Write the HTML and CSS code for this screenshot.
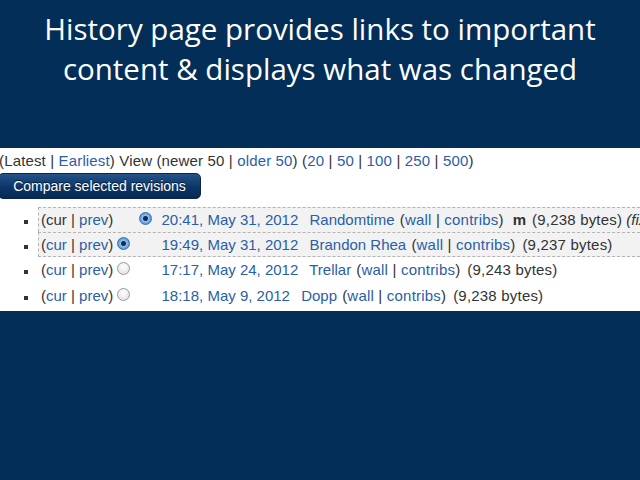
FILE: index.html
```html
<!DOCTYPE html>
<html lang="en">
<head>
  <meta charset="UTF-8">
  <meta name="viewport" content="width=device-width, initial-scale=1.0">
  <title>History page</title>
  <link rel="stylesheet" href="styles.css">
</head>
<body>
  <h1 class="slide-title">History page provides links to important<br>content &amp; displays what was changed</h1>

  <div class="history">
    <div class="nav-line">(Latest | <a href="#">Earliest</a>) View (newer 50 | <a href="#">older 50</a>) (<a href="#">20</a> | <a href="#">50</a> | <a href="#">100</a> | <a href="#">250</a> | <a href="#">500</a>)</div>
    <button class="compare-btn">Compare selected revisions</button>

    <ul class="revisions">
      <li class="selected">
        <span class="diff-links">(cur | <a href="#">prev</a>)</span>
        <span class="radio-slot"></span>
        <span class="radio-slot"><span class="radio checked"></span></span>
        <a href="#" class="date">20:41, May 31, 2012</a>
        <a href="#">Randomtime</a> <span class="user-tools">(<a href="#">wall</a> | <a href="#">contribs</a>)</span><b class="minor">m</b><span class="bytes minor-bytes">(9,238 bytes)</span> <i>(fixed</i>
      </li>
      <li class="selected">
        <span class="diff-links">(<a href="#">cur</a> | <a href="#">prev</a>)</span>
        <span class="radio-slot"><span class="radio checked"></span></span>
        <span class="radio-slot"></span>
        <a href="#" class="date">19:49, May 31, 2012</a>
        <a href="#">Brandon Rhea</a> <span class="user-tools">(<a href="#">wall</a> | <a href="#">contribs</a>)</span><span class="bytes">(9,237 bytes)</span>
      </li>
      <li>
        <span class="diff-links">(<a href="#">cur</a> | <a href="#">prev</a>)</span>
        <span class="radio-slot"><span class="radio"></span></span>
        <span class="radio-slot"></span>
        <a href="#" class="date">17:17, May 24, 2012</a>
        <a href="#">Trellar</a> <span class="user-tools">(<a href="#">wall</a> | <a href="#">contribs</a>)</span><span class="bytes">(9,243 bytes)</span>
      </li>
      <li>
        <span class="diff-links">(<a href="#">cur</a> | <a href="#">prev</a>)</span>
        <span class="radio-slot"><span class="radio"></span></span>
        <span class="radio-slot"></span>
        <a href="#" class="date">18:18, May 9, 2012</a>
        <a href="#">Dopp</a> <span class="user-tools">(<a href="#">wall</a> | <a href="#">contribs</a>)</span><span class="bytes">(9,238 bytes)</span>
      </li>
    </ul>
  </div>
</body>
</html>
```

FILE: styles.css
```css
body {
  margin: 0;
  padding: 0;
  background-color: #022e58;
  overflow: hidden;
}

.slide-title {
  margin: 0;
  padding: 9px 0 0;
  height: 138px;
  box-sizing: border-box;
  font-family: "Open Sans", sans-serif;
  font-weight: normal;
  font-size: 29.5px;
  line-height: 40px;
  color: #fff;
  text-align: center;
}

.history {
  background-color: #fff;
  height: 163px;
  margin-top: 10px;
  font-family: "Liberation Sans", Arial, sans-serif;
  font-size: 15px;
  color: #333;
  white-space: nowrap;
  overflow: hidden;
}

.history a {
  color: #2a5ea8;
  text-decoration: none;
}

.nav-line {
  height: 25px;
  line-height: 25px;
  margin-left: -1px;
  letter-spacing: 0.15px;
}

.compare-btn {
  display: block;
  width: 203px;
  height: 26px;
  margin: 0 0 8px -2px;
  padding: 0;
  border: 1px solid #0a2747;
  border-radius: 5px;
  background: linear-gradient(#24538a, #0c3566 55%, #072a52);
  color: #fff;
  font-family: "Liberation Sans", Arial, sans-serif;
  font-size: 14px;
  text-shadow: 0 -1px 0 #041a33;
}

.revisions {
  margin: 0;
  padding: 0 0 0 38px;
  list-style: square;
}

.revisions li {
  height: 25px;
  line-height: 24px;
  padding-left: 2px;
  border: 1px dashed transparent;
  border-width: 1px 0 0 1px;
  box-sizing: border-box;
}

.revisions li::marker {
  color: #333;
  font-size: 12px;
}

.revisions li:nth-child(n+3) {
  height: 26px;
}

.revisions li.selected {
  background-color: #f2f2f2;
  border-color: #b4b4b4;
}

.revisions li.selected + li.selected {
  height: 25px;
  border-bottom: 1px dashed #b4b4b4;
}

.diff-links {
  display: inline-block;
  width: 72px;
}

.radio-slot {
  display: inline-block;
  width: 18px;
  height: 14px;
  vertical-align: -1px;
}

.radio {
  display: block;
  width: 11px;
  height: 11px;
  border: 1px solid #9a9a9a;
  border-radius: 50%;
  background: radial-gradient(circle at 50% 35%, #fff, #dcdcdc);
}

.radio.checked {
  border-color: #3b6fb0;
  background: radial-gradient(circle, #1a2a44 0 2px, #8fc0ee 3px, #4d8fd6 6px);
}

.date {
  margin-right: 7px;
}

.user-tools,
.bytes {
  letter-spacing: 0.2px;
}

.user-tools {
  margin-left: 1px;
}

.minor {
  margin-left: 9px;
}

.bytes {
  margin-left: 7px;
}

.minor-bytes {
  margin-left: 6px;
}
```
